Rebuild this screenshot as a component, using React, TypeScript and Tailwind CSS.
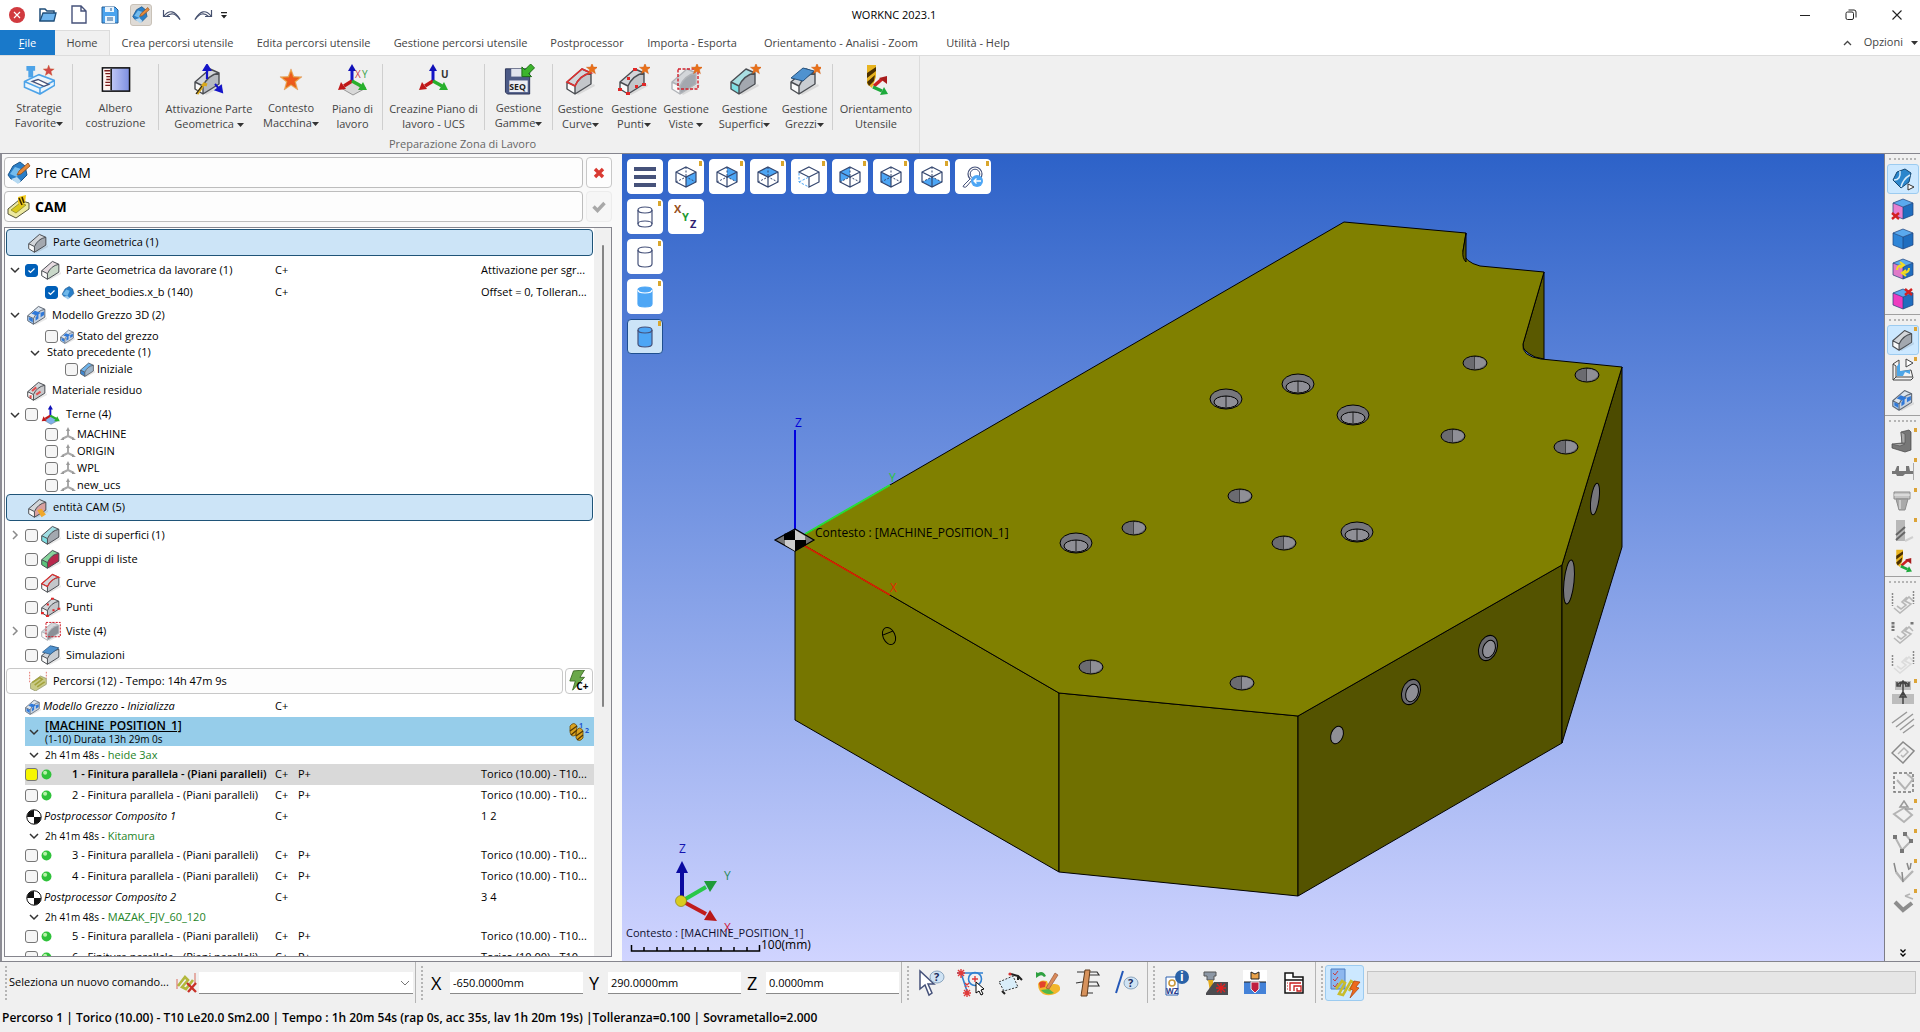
import { ReactNode } from "react";
import { clsx } from "clsx";

/* ---------- shared drawing pieces ---------- */

interface IconProps {
  className?: string;
}

const Star = ({ x = 25, y = 6, r = 6, fill = "#e8701a" }) => {
  const pts = Array.from({ length: 10 }, (_, i) => {
    const a = -Math.PI / 2 + (i * Math.PI) / 5;
    const d = i % 2 ? r * 0.42 : r;
    return `${(x + d * Math.cos(a)).toFixed(2)},${(y + d * Math.sin(a)).toFixed(2)}`;
  }).join(" ");
  return <polygon points={pts} fill={fill} stroke="#c5561099" strokeWidth=".5" />;
};

interface BlockProps extends IconProps {
  top?: string;
  front?: string;
  side?: string;
  stroke?: string;
  children?: ReactNode;
}

// rounded machining block, the base of most of the part icons
const Block = ({
  className = "size-8",
  top = "#d3d6da",
  front = "#fafafa",
  side = "#a3a8af",
  stroke = "#4a4d52",
  children,
}: BlockProps) => (
  <svg
    viewBox={className === "size-8" ? "0 0 32 32" : "1 3 28 28"}
    className={clsx("shrink-0", className)}
  >
    <path d="M3 19 L12 28 L29 20 L30 22 L13 31 Z" fill="#00000018" />
    <path d="M2 18 L17 5 L26 9 Q15 11 10 22 Z" fill={top} />
    <path d="M10 22 Q15 11 26 9 L26 20 L10 30 Z" fill={side} />
    <path d="M2 18 L10 22 L10 30 L2 25 Z" fill={front} />
    <path
      d="M2 18 L17 5 L26 9 L26 20 L10 30 L2 25 Z M2 18 L10 22 L10 30 M10 22 Q15 11 26 9"
      fill="none"
      stroke={stroke}
      strokeWidth="1.4"
      strokeLinejoin="round"
    />
    {children}
  </svg>
);

const StockBlock = ({ className }: IconProps) => (
  <Block className={className} top="#dbe4ee" side="#c9d3df" front="#a9cdf2" stroke="#5f6875">
    <path d="M7 15 L12 11 L20 14 L15 18Z M4 20 L9 22 L9 27 L4 24Z M13 20 L17 16 L17 22 L13 25Z M20 14 L25 12 L25 17 L20 20Z" fill="#2f78d8" />
  </Block>
);

const BluePart = ({ className = "size-5" }: IconProps) => (
  <svg viewBox="0 0 24 24" className={clsx("shrink-0", className)}>
    <path d="M2 14 L7 5 L14 1 L20 5 L22 13 L15 20 L5 18Z" fill="#2a7fc8" stroke="#1b5488" />
    <path d="M3 14 L9 6 L15 8 L11 17Z" fill="#6fb8ea" />
    <path d="M5 18 L11 17 L15 20 L12 23Z" fill="#9ecdf0" />
  </svg>
);

const PreCamIcon = ({ className = "size-6" }: IconProps) => (
  <svg viewBox="0 0 24 24" className={clsx("shrink-0", className)}>
    <path d="M1 14 L6 5 L13 1 L18 5 L20 14 L13 21 L4 18Z" fill="#2a7fc8" stroke="#1b5488" />
    <path d="M3 13 L8 6 L14 8 L10 16Z" fill="#74bced" />
    <path d="M4 18 L10 16 L14 20 L11 23Z" fill="#b5d9f2" />
    <path d="M10 14 L12 10 L21 2 L23 5 L14 13Z" fill="#e58a3c" stroke="#8d4a17" strokeWidth=".8" />
  </svg>
);

const CamIcon = ({ className = "size-6" }: IconProps) => (
  <svg viewBox="0 0 24 24" className={clsx("shrink-0", className)}>
    <path d="M1 14 L12 5 L22 8 L22 14 L9 23 L1 19Z" fill="#ece9a0" stroke="#55553a" />
    <path d="M4 15 L13 8 L19 10 L9 18Z" fill="#d8c81c" stroke="#86801c" strokeWidth=".7" />
    <path d="M11 2 L19 0 L18 8 L14 12 L11 8Z" fill="#f0c818" />
    <path d="M12 3 L15 10 M15 2 L17 8" stroke="#3c2b00" strokeWidth="1.6" />
  </svg>
);

interface TriadProps extends IconProps {
  label?: ReactNode;
  plane?: string;
}

const Triad = ({ className = "size-8", label, plane }: TriadProps) => (
  <svg viewBox="0 0 32 32" className={clsx("shrink-0", className)}>
    {plane && <path d="M16 17 L29 24 L16 31 L4 24Z" fill={plane} stroke="#777" strokeWidth=".7" />}
    <path d="M15 17 V5" stroke="#1414c8" strokeWidth="3" />
    <path d="M15 0 L19 7 H11Z" fill="#1010b8" />
    <path d="M15 17 L7 22" stroke="#c01818" strokeWidth="3.4" />
    <path d="M1 26 L4 18 L9 25Z" fill="#c01818" />
    <path d="M15 17 L24 22" stroke="#28b02c" strokeWidth="3.4" />
    <path d="M30 26 L21 26 L26 18Z" fill="#28b02c" />
    {label}
  </svg>
);

const GreyTriad = () => (
  <svg viewBox="0 0 16 16" className="size-4 shrink-0">
    <path d="M8 9 V2 M8 9 L2 12 M8 9 L14 12" stroke="#a9a9a9" strokeWidth="2" />
    <path d="M8 0 L10 4 H6Z M0 13 L4 10 L4 13Z M16 13 L12 10 L12 13Z" fill="#9a9a9a" />
  </svg>
);

const CurveBlock = ({ className }: IconProps) => (
  <Block className={className} side="#c3c6ca">
    <path d="M2 18 L17 5 L26 9 Q15 11 10 22Z" fill="none" stroke="#e03030" strokeWidth="1.6" />
  </Block>
);

const PointBlock = ({ className }: IconProps) => (
  <Block className={className} side="#c3c6ca">
    <path d="M15 4h4v3h-4z M1 24h4v3h-4z M8 28h4v3h-4z M24 18h4v3h-4z M9 12h3v3h-3z M17 20h3v3h-3z" fill="#e02828" />
  </Block>
);

const ViewBlock = ({ className }: IconProps) => (
  <Block className={className} stroke="#b0b3b8" side="#8b9097">
    <path d="M8 5 H28 V25 H8Z" fill="none" stroke="#d2202c" strokeWidth="1.4" strokeDasharray="3 1.5" />
  </Block>
);

const SimBlock = ({ className }: IconProps) => (
  <Block className={className} side="#c9cdd2">
    <path d="M3 13 L14 4 L26 7 L14 16Z" fill="#4f92cf" stroke="#24527f" />
  </Block>
);

const DrillTool = ({ className = "size-8" }: IconProps) => (
  <svg viewBox="0 0 32 32" className={clsx("shrink-0", className)}>
    <path d="M7 1 H16 V13 L12 24 L7 20Z" fill="#e8b420" />
    <path d="M7 9 L16 3 V7 L7 14Z M7 18 L15 11 L14 17 L9 22Z" fill="#4b3000" />
    <path d="M14 22 L22 15" stroke="#c22" strokeWidth="3.4" />
    <path d="M27 12 L27 20 L19 14Z" fill="#a81c1c" />
    <path d="M13 23 L22 27" stroke="#1eaa3c" strokeWidth="3.4" />
    <path d="M28 30 L20 31 L24 23Z" fill="#1eaa3c" />
  </svg>
);

const PathIcon = ({ className = "size-5" }: IconProps) => (
  <svg viewBox="0 0 24 24" className={clsx("shrink-0", className)}>
    <path d="M3 15 L15 6 L22 9 L22 16 L9 24 L3 21Z" fill="#c8ca86" stroke="#8a8c60" strokeWidth=".8" />
    <path d="M5 14 L14 8 L17 10 L8 17 M11 19 L20 13" fill="none" stroke="#a3a23c" strokeWidth="2" />
    <path d="M2 1 V14 M22 1 V9" stroke="#e05a50" strokeDasharray="2 1.5" />
  </svg>
);

const Chevron = ({ open = true }) => (
  <svg viewBox="0 0 10 10" className="size-[10px] shrink-0">
    <path
      d={open ? "M1 3 L5 7 L9 3" : "M3 1 L7 5 L3 9"}
      fill="none"
      stroke={open ? "#333" : "#8a8a8a"}
      strokeWidth="1.5"
    />
  </svg>
);

const Caret = () => (
  <svg viewBox="0 0 7 4" className="inline-block h-1 w-[7px] align-middle">
    <path d="M0 0 H7 L3.5 4Z" fill="#333" />
  </svg>
);

/* ---------- title bar ---------- */

const QuickAccess = () => (
  <div className="flex w-60 items-center pl-px">
    <button aria-label="Chiudi" className="grid w-[31px] place-items-center">
      <svg viewBox="0 0 16 16" className="size-4">
        <circle cx="8" cy="8" r="8" fill="#d13a3f" />
        <path d="M5 5 L11 11 M11 5 L5 11" stroke="#fff" strokeWidth="1.2" />
      </svg>
    </button>
    <button aria-label="Apri" className="grid w-[31px] place-items-center">
      <svg viewBox="0 0 18 16" className="h-4 w-[18px]">
        <path d="M1 14 V2 H6 L8 4 H15 V6" fill="none" stroke="#1f4e79" strokeWidth="1.5" />
        <path d="M1 14 L4 6 H17 L15 14Z" fill="#6db4ee" stroke="#1f4e79" strokeWidth="1.3" />
      </svg>
    </button>
    <button aria-label="Nuovo" className="grid w-[31px] place-items-center">
      <svg viewBox="0 0 16 20" className="h-5 w-4">
        <path d="M1 1 H10 L15 6 V18 H1Z M10 1 V6 H15" fill="#fff" stroke="#46527a" strokeWidth="1.4" />
      </svg>
    </button>
    <button aria-label="Salva" className="grid w-[31px] place-items-center">
      <svg viewBox="0 0 18 18" className="size-[18px]">
        <path d="M1 1 H14 L17 4 V17 H1Z" fill="#4aa3ee" stroke="#245d94" />
        <path d="M4 1 H13 V6 H4Z M4 10 H14 V17 H4Z" fill="#e9f4fd" />
        <path d="M10 2 V5 M6 12 H12 M6 14 H12" stroke="#245d94" />
      </svg>
    </button>
    <button aria-label="Pre CAM" className="grid w-[31px] place-items-center">
      <span className="grid size-[22px] place-items-center rounded-[3px] border border-[#c9c2b8] bg-[#dfdbd6]">
        <PreCamIcon className="size-[18px]" />
      </span>
    </button>
    <button aria-label="Annulla" className="grid w-[31px] place-items-center">
      <svg viewBox="0 0 20 14" className="h-[14px] w-5">
        <path d="M1.5 2 V8.5 H8 M2 8 Q10 -2 18 11.5" fill="none" stroke="#45506e" strokeWidth="1.2" />
        <path d="M4.5 8.5 Q11 2 18 11.5" fill="none" stroke="#45506e" strokeWidth="1.2" />
      </svg>
    </button>
    <button aria-label="Ripeti" className="grid w-[31px] place-items-center">
      <svg viewBox="0 0 20 14" className="h-[14px] w-5">
        <path d="M18.5 2 V8.5 H12 M18 8 Q10 -2 2 11.5" fill="none" stroke="#45506e" strokeWidth="1.2" />
        <path d="M15.5 8.5 Q9 2 2 11.5" fill="none" stroke="#45506e" strokeWidth="1.2" />
      </svg>
    </button>
    <button aria-label="Personalizza" className="grid w-3 place-items-center">
      <svg viewBox="0 0 6 7" className="h-[7px] w-[6px]">
        <path d="M0 0 H6 V1.2 H0Z M0 3 H6 L3 6.5Z" fill="#222" />
      </svg>
    </button>
  </div>
);

const TitleBar = () => (
  <header className="flex h-[30px] shrink-0 items-center bg-white">
    <QuickAccess />
    <h1 className="flex-1 text-center">WORKNC 2023.1</h1>
    <div className="flex w-[372px] justify-end">
      <button aria-label="Riduci" className="grid h-[30px] w-[46px] place-items-center">
        <svg viewBox="0 0 12 12" className="size-3">
          <path d="M1 6.5 H11" stroke="#222" />
        </svg>
      </button>
      <button aria-label="Ripristina" className="grid h-[30px] w-[46px] place-items-center">
        <svg viewBox="0 0 12 12" className="size-3">
          <rect x="1" y="3" width="7.5" height="7.5" rx="1.5" fill="none" stroke="#222" />
          <path d="M3.5 1 H9 Q11 1 11 3 V8.5" fill="none" stroke="#222" />
        </svg>
      </button>
      <button aria-label="Chiudi finestra" className="grid h-[30px] w-[46px] place-items-center">
        <svg viewBox="0 0 12 12" className="size-3">
          <path d="M1.5 1.5 L10.5 10.5 M10.5 1.5 L1.5 10.5" stroke="#222" strokeWidth="1.1" />
        </svg>
      </button>
    </div>
  </header>
);

/* ---------- ribbon ---------- */

const TABS = [
  { label: "Crea percorsi utensile", width: "w-[135px]" },
  { label: "Edita percorsi utensile", width: "w-[137px]" },
  { label: "Gestione percorsi utensile", width: "w-[157px]" },
  { label: "Postprocessor", width: "w-[96px]" },
  { label: "Importa - Esporta", width: "w-[114px]" },
  { label: "Orientamento - Analisi - Zoom", width: "w-[184px]" },
  { label: "Utilità - Help", width: "w-[90px]" },
];

const RibbonTabs = () => (
  <nav className="flex h-[25px] shrink-0 bg-white whitespace-nowrap text-[#444]">
    <button className="w-[55px] bg-[#1979ca] pt-px text-white">
      <span className="underline">F</span>ile
    </button>
    <button className="w-[55px] border-t border-r border-[#dcdcdc] bg-[#f0f0f0]">Home</button>
    {TABS.map((tab) => (
      <button key={tab.label} className={clsx("flex shrink-0 items-center justify-center pt-px", tab.width)}>
        {tab.label}
      </button>
    ))}
    <div className="ml-auto flex items-center gap-3 pr-[2px]">
      <svg viewBox="0 0 9 6" className="h-[6px] w-[9px]">
        <path d="M1 5 L4.5 1.5 L8 5" fill="none" stroke="#444" strokeWidth="1.3" />
      </svg>
      <button className="flex items-center gap-2">
        Opzioni <Caret />
      </button>
    </div>
  </nav>
);

interface RibbonItem {
  lines: [string, string];
  icon: ReactNode;
  width: string;
  menu?: boolean;
}

const RIBBON_GROUPS: RibbonItem[][] = [
  [
    {
      lines: ["Strategie", "Favorite"],
      width: "w-[66px]",
      menu: true,
      icon: (
        <svg viewBox="0 0 32 32" className="size-8">
          <path d="M3 2 H12 V7 H10 V14 H5 V7 H3Z" fill="#4da3e8" />
          <path d="M1 18 L16 11 L32 17 L32 22 L17 31 L1 24Z M1 18 L17 25 L32 17 M17 25 V31" fill="#eaf5fd" stroke="#4da3e8" strokeWidth="1.6" />
          <path d="M9 18 L15 16 L26 21 L21 23Z" fill="#fff" stroke="#46527a" strokeWidth="1.4" />
          <Star x={26} y={7} r={6} fill="#d24848" />
        </svg>
      ),
    },
  ],
  [
    {
      lines: ["Albero", "costruzione"],
      width: "w-[85px]",
      icon: (
        <svg viewBox="0 0 32 32" className="size-8">
          <defs>
            <linearGradient id="treeBg" x1="0" x2="1">
              <stop offset="0" stopColor="#dfe4ff" />
              <stop offset="1" stopColor="#7c8ee0" />
            </linearGradient>
          </defs>
          <rect x="2" y="4" width="28" height="24" fill="url(#treeBg)" stroke="#111" strokeWidth="1.6" />
          <rect x="3" y="5" width="8" height="22" fill="#fff3ee" />
          <path d="M4 7 H10 M5 10 H10 M6 13 H10 M6 16 H10 M5 19 H10 M5 22 H10" stroke="#7c1c1c" strokeWidth="1.4" />
          <path d="M11 5 V27" stroke="#111" strokeWidth="1.6" />
        </svg>
      ),
    },
  ],
  [
    {
      lines: ["Attivazione Parte", "Geometrica "],
      width: "w-[100px]",
      menu: true,
      icon: (
        <Block side="#b5b9bf">
          <path d="M14 15 V4 M14 1 L17 6 H11Z" stroke="#1414c8" strokeWidth="2.2" fill="#1414c8" />
          <path d="M22 20 L27 26 M29 28 L28 22 L23 26Z" stroke="#1414c8" strokeWidth="2" fill="#1414c8" />
          <path d="M4 30 L11 20 L14 21" fill="none" stroke="#d8a81c" strokeWidth="3" />
          <path d="M3 30 L9 22" stroke="#222" strokeWidth="1.2" />
        </Block>
      ),
    },
    {
      lines: ["Contesto", "Macchina"],
      width: "w-[64px]",
      menu: true,
      icon: (
        <svg viewBox="0 0 32 32" className="size-8">
          <Star x={16} y={17} r={12} fill="#f9b14a" />
          <Star x={16} y={17} r={9} fill="#ee5a1c" />
        </svg>
      ),
    },
    {
      lines: ["Piano di", "lavoro"],
      width: "w-[59px]",
      icon: (
        <Triad
          plane="#d8d8d8"
          label={
            <>
              <text x="18" y="14" fontSize="10" fill="#d04040">X</text>
              <text x="25" y="14" fontSize="10" fill="#38a048">Y</text>
            </>
          }
        />
      ),
    },
  ],
  [
    {
      lines: ["Creazine Piano di", "lavoro - UCS"],
      width: "w-[101px]",
      icon: <Triad label={<text x="23" y="14" fontSize="10" fontWeight="bold" fill="#333">U</text>} />,
    },
  ],
  [
    {
      lines: ["Gestione", "Gamme"],
      width: "w-[67px]",
      menu: true,
      icon: (
        <svg viewBox="0 0 32 32" className="size-8">
          <path d="M2 5 H27 V31 H4 L2 29Z" fill="#4c5a86" stroke="#2c3558" />
          <path d="M8 5 H20 V13 H8Z" fill="#dfe3ee" />
          <path d="M6 17 H25 V29 H6Z" fill="#eceef4" />
          <text x="6" y="27" fontSize="9" fontWeight="bold" fill="#222">SEQ</text>
          <path d="M19 13 V3 L22 6 L28 0 L32 4 L26 10 L29 13Z" fill="#3cb42c" stroke="#1c6c14" />
        </svg>
      ),
    },
  ],
  [
    {
      lines: ["Gestione", "Curve"],
      width: "w-[55px]",
      menu: true,
      icon: (
        <Block side="#c3c6ca">
          <path d="M2 18 L17 5 L26 9 Q15 11 10 22Z" fill="none" stroke="#e03030" strokeWidth="1.6" />
          <Star x={27} y={5} />
        </Block>
      ),
    },
    {
      lines: ["Gestione", "Punti"],
      width: "w-[52px]",
      menu: true,
      icon: (
        <Block side="#c3c6ca">
          <path d="M15 4h4v3h-4z M0 24h4v3h-4z M8 28h4v3h-4z M24 19h4v3h-4z M9 13h3v3h-3z M17 21h3v3h-3z" fill="#e02828" />
          <Star x={27} y={5} />
        </Block>
      ),
    },
    {
      lines: ["Gestione", "Viste "],
      width: "w-[52px]",
      menu: true,
      icon: (
        <Block stroke="#b0b3b8">
          <path d="M8 5 H28 V25 H8Z" fill="none" stroke="#d2202c" strokeWidth="1.4" strokeDasharray="3 1.5" />
          <Star x={27} y={5} />
        </Block>
      ),
    },
    {
      lines: ["Gestione", "Superfici"],
      width: "w-[65px]",
      menu: true,
      icon: (
        <Block front="#7fe0e4" top="#a9dfe2">
          <Star x={27} y={5} />
        </Block>
      ),
    },
    {
      lines: ["Gestione", "Grezzi"],
      width: "w-[55px]",
      menu: true,
      icon: (
        <Block side="#c9cdd2">
          <path d="M2 14 L14 4 L25 7 L14 17Z" fill="#4f92cf" stroke="#24527f" />
          <Star x={28} y={5} />
        </Block>
      ),
    },
  ],
  [{ lines: ["Orientamento", "Utensile"], width: "w-[86px]", icon: <DrillTool /> }],
];

const Ribbon = () => (
  <section className="flex h-[98px] shrink-0 border-t border-[#dcdcdc] bg-[#f0f0f0] text-[#444]">
    <div className="flex flex-col border-r border-[#dcdcdc] pl-[6px]">
      <div className="flex pt-2">
        {RIBBON_GROUPS.map((group, i) => (
          <div key={i} className={clsx("flex h-[66px]", i < RIBBON_GROUPS.length - 1 && "border-r border-[#cfcfcf]")}>
            {group.map((item) => (
              <button
                key={item.lines.join(" ")}
                className={clsx("flex shrink-0 flex-col items-center leading-[15px] whitespace-pre", item.width)}
              >
                {item.icon}
                <span className="mt-[5px]">{item.lines[0]}</span>
                <span>
                  {item.lines[1]}
                  {item.menu && <Caret />}
                </span>
              </button>
            ))}
          </div>
        ))}
      </div>
      <p className="mt-[6px] text-center leading-[15px] text-[#666]">Preparazione Zona di Lavoro</p>
    </div>
  </section>
);

/* ---------- tree panel ---------- */

interface TickProps {
  label: string;
  checked?: boolean;
  yellow?: boolean;
}

const Tick = ({ label, checked, yellow }: TickProps) => (
  <span className="relative size-[13px] shrink-0">
    <input
      type="checkbox"
      aria-label={label}
      defaultChecked={checked}
      className={clsx(
        "block size-[13px] appearance-none rounded-[3px] border border-[#767676] checked:border-[#005fb8] checked:bg-[#005fb8]",
        yellow ? "bg-[#f6f600]" : "bg-[#f5f5f5]",
      )}
    />
    {checked && (
      <svg viewBox="0 0 13 13" className="pointer-events-none absolute inset-0">
        <path d="M3.5 6.5 L5.5 8.5 L9.5 4.5" fill="none" stroke="#fff" strokeWidth="1.2" />
      </svg>
    )}
  </span>
);

interface TreeRowProps {
  label: string;
  height: string;
  indent?: string;
  chevron?: "open" | "closed" | "none";
  tick?: boolean;
  checked?: boolean;
  yellow?: boolean;
  icon?: ReactNode;
  gap?: string;
  flags?: string;
  post?: string;
  info?: string;
  labelClass?: string;
  rowClass?: string;
}

const TreeRow = ({
  label,
  height,
  indent = "pl-0",
  chevron,
  tick,
  checked,
  yellow,
  icon,
  gap = "pl-[5px]",
  flags,
  post,
  info,
  labelClass,
  rowClass,
}: TreeRowProps) => (
  <li className={clsx("grid grid-cols-[270px_23px_183px_1fr] items-center whitespace-nowrap", height, rowClass)}>
    <div className={clsx("flex items-center", indent)}>
      {chevron && (
        <span className="grid w-5 shrink-0 place-items-center">
          {chevron !== "none" && <Chevron open={chevron === "open"} />}
        </span>
      )}
      {tick && <Tick label={label} checked={checked} yellow={yellow} />}
      {icon}
      <span className={clsx(gap, labelClass)}>{label}</span>
    </div>
    <span>{flags}</span>
    <span>{post}</span>
    <span>{info}</span>
  </li>
);

const wide = (icon: ReactNode) => <span className="ml-[3px] grid size-5 shrink-0 place-items-center">{icon}</span>;
const bare = (icon: ReactNode) => <span className="ml-[2px] grid size-5 shrink-0 place-items-center">{icon}</span>;
const small = (icon: ReactNode) => <span className="ml-[2px] grid size-[15px] shrink-0 place-items-center">{icon}</span>;

const UCS_NAMES = ["MACHINE", "ORIGIN", "WPL", "new_ucs"];

const PartTree = () => (
  <ul className="pt-px">
    <TreeRow
      label="Parte Geometrica da lavorare (1)"
      height="h-[26px]"
      chevron="open"
      tick
      checked
      icon={wide(<Block className="size-5" side="#c9d8c9" top="#e6dbe0" />)}
      flags="C+"
      info="Attivazione per sgr..."
    />
    <TreeRow
      label="sheet_bodies.x_b (140)"
      height="h-[19px]"
      indent="pl-10"
      tick
      checked
      icon={small(<BluePart className="size-[14px]" />)}
      gap="pl-[2px]"
      flags="C+"
      info="Offset = 0, Tolleran..."
    />
    <TreeRow
      label="Modello Grezzo 3D (2)"
      height="h-[26px]"
      chevron="open"
      icon={bare(<StockBlock className="size-5" />)}
    />
    <TreeRow
      label="Stato del grezzo"
      height="h-4"
      indent="pl-10"
      tick
      icon={small(<StockBlock className="size-[15px]" />)}
      gap="pl-[2px]"
    />
    <TreeRow label="Stato precedente (1)" height="h-[17px]" indent="pl-5" chevron="open" gap="pl-[2px]" />
    <TreeRow
      label="Iniziale"
      height="h-[17px]"
      indent="pl-[60px]"
      tick
      icon={small(<Block className="size-[15px]" top="#6fb3ea" front="#3d86cf" side="#9fb3c6" />)}
      gap="pl-[2px]"
    />
    <TreeRow
      label="Materiale residuo"
      height="h-[25px]"
      chevron="none"
      icon={bare(
        <Block className="size-5" side="#c9c9cc">
          <path d="M8 17 L14 12 M6 23 L6 27 M14 22 L20 18" stroke="#e05050" strokeWidth="3" />
        </Block>,
      )}
    />
    <TreeRow
      label="Terne (4)"
      height="h-[23px]"
      chevron="open"
      tick
      icon={wide(<Triad className="size-5" plane="#7fb0ea" />)}
    />
    {UCS_NAMES.map((name) => (
      <TreeRow
        key={name}
        label={name}
        height="h-[17px]"
        indent="pl-10"
        tick
        icon={small(<GreyTriad />)}
        gap="pl-[2px]"
      />
    ))}
  </ul>
);

const EntityTree = () => (
  <ul className="pt-[2px] pb-px">
    <TreeRow
      label="Liste di superfici (1)"
      height="h-6"
      chevron="closed"
      tick
      icon={wide(<Block className="size-5" front="#7fe0e4" top="#9fdde2" />)}
    />
    <TreeRow
      label="Gruppi di liste"
      height="h-6"
      chevron="none"
      tick
      icon={wide(<Block className="size-5" front="#5cc47c" top="#86d49c" side="#b8284c" />)}
    />
    <TreeRow label="Curve" height="h-6" chevron="none" tick icon={wide(<CurveBlock className="size-5" />)} />
    <TreeRow label="Punti" height="h-6" chevron="none" tick icon={wide(<PointBlock className="size-5" />)} />
    <TreeRow label="Viste (4)" height="h-6" chevron="closed" tick icon={wide(<ViewBlock className="size-5" />)} />
    <TreeRow label="Simulazioni" height="h-6" chevron="none" tick icon={wide(<SimBlock className="size-5" />)} />
  </ul>
);

const GreenBall = () => (
  <svg viewBox="0 0 12 12" className="ml-[3px] size-[11px] shrink-0">
    <circle cx="6" cy="6" r="5.4" fill="#2fc23a" />
    <circle cx="4.5" cy="4" r="2.2" fill="#b6f2a8" />
  </svg>
);

const PostIcon = () => (
  <svg viewBox="0 0 16 16" className="size-4 shrink-0">
    <circle cx="8" cy="8" r="7.2" fill="#fff" stroke="#111" />
    <path d="M8 8 V1 A7 7 0 0 0 1 8Z M8 8 V15 A7 7 0 0 0 15 8Z" fill="#111" />
  </svg>
);

const PathRow = ({ n, selected = false }: { n: number; selected?: boolean }) => (
  <TreeRow
    label={`${n} - Finitura parallela - (Piani paralleli)`}
    height="h-[21px]"
    indent="pl-5"
    tick
    yellow={selected}
    icon={<GreenBall />}
    gap="pl-5"
    flags="C+"
    post="P+"
    info="Torico (10.00) - T10..."
    labelClass={clsx(selected && "font-semibold")}
    rowClass={clsx(selected && "bg-[linear-gradient(to_right,transparent_20px,#d9d9d9_20px)]")}
  />
);

const PostRow = ({ n, info }: { n: number; info: string }) => (
  <TreeRow
    label={`Postprocessor Composito ${n}`}
    height="h-[21px]"
    indent="pl-[21px]"
    icon={<PostIcon />}
    gap="pl-[2px]"
    flags="C+"
    info={info}
    labelClass="italic"
  />
);

const MachineRow = ({ name }: { name: string }) => (
  <li className="flex h-[18px] items-center pl-6">
    <Chevron />
    <span className="pl-[6px] text-[10px]">2h 41m 48s -</span>
    <span className="pl-[3px] text-[#1e8427]">{name}</span>
  </li>
);

const PathTree = () => (
  <ul className="pt-[2px]">
    <TreeRow
      label="Modello Grezzo - Inizializza"
      height="h-[21px]"
      indent="pl-5"
      icon={<StockBlock className="size-4" />}
      gap="pl-[2px]"
      flags="C+"
      labelClass="italic"
    />
    <li className="ml-5 flex h-[29px] items-center bg-[#96cdea] pl-1">
      <Chevron />
      <div className="flex-1 pl-[6px]">
        <p className="text-xs leading-[15px] font-semibold underline">[MACHINE_POSITION_1]</p>
        <p className="text-[10px] leading-3">(1-10) Durata 13h 29m 0s</p>
      </div>
      <button aria-label="Riordina" className="mr-1">
        <svg viewBox="0 0 22 20" className="h-5 w-[22px]">
          <path d="M2 4 Q6 -1 9 4 L8 13 Q3 16 2 10Z M8 9 Q12 3 15 9 L15 16 Q11 21 8 16Z" fill="#d9a21e" stroke="#6d4b08" strokeWidth=".8" />
          <path d="M2 9 L9 4 M3 13 L9 8 M8 14 L15 9 M9 18 L15 13" stroke="#4d3406" strokeWidth="1.1" />
          <text x="11" y="6" fontSize="7" fontWeight="bold" fill="#1f55d0">1</text>
          <text x="17" y="11" fontSize="7" fontWeight="bold" fill="#1f55d0">2</text>
        </svg>
      </button>
    </li>
    <MachineRow name="heide 3ax" />
    <PathRow n={1} selected />
    <PathRow n={2} />
    <PostRow n={1} info="1 2" />
    <MachineRow name="Kitamura" />
    <PathRow n={3} />
    <PathRow n={4} />
    <PostRow n={2} info="3 4" />
    <MachineRow name="MAZAK_FJV_60_120" />
    <PathRow n={5} />
    <PathRow n={6} />
  </ul>
);

const SectionHeader = ({ icon, children }: { icon: ReactNode; children: ReactNode }) => (
  <h2 className="mx-px flex h-[27px] items-center gap-[5px] rounded-[4px] border border-[#1f5478] bg-[#cce4f7] pl-[21px]">
    <span className="grid size-5 place-items-center">{icon}</span>
    {children}
  </h2>
);

const SidePanel = () => (
  <aside className="flex min-h-0 w-[622px] shrink-0 flex-col border-l-2 border-[#8c8c94] bg-[#f9f9f9] pt-[3px] pr-[10px] pb-1 pl-[2px]">
    <div className="flex gap-[3px]">
      <button className="flex h-[31px] flex-1 items-center gap-1 rounded-[4px] border border-[#bdbdbd] bg-[#fdfdfd] pl-[2px] text-sm">
        <PreCamIcon /> Pre CAM
      </button>
      <button aria-label="Annulla" className="grid h-[31px] w-[26px] place-items-center rounded-[4px] border border-[#c8c8c8] bg-[#fdfdfd]">
        <svg viewBox="0 0 12 12" className="size-3">
          <path d="M2 2 L10 10 M10 2 L2 10" stroke="#d93a32" strokeWidth="3.4" />
        </svg>
      </button>
    </div>
    <div className="mt-[3px] flex gap-[3px]">
      <button className="flex h-[31px] flex-1 items-center gap-1 rounded-[4px] border border-[#bdbdbd] bg-[#fdfdfd] pl-[2px] text-sm font-bold">
        <CamIcon /> CAM
      </button>
      <button aria-label="Conferma" className="grid h-[31px] w-[26px] place-items-center rounded-[4px] border border-[#ececec] bg-[#f6f6f6]">
        <svg viewBox="0 0 14 12" className="h-3 w-[14px]">
          <path d="M1.5 5.5 L5.5 9.5 L12.5 2" fill="none" stroke="#a8a8a8" strokeWidth="3.4" />
        </svg>
      </button>
    </div>
    <div className="mt-[5px] flex min-h-0 flex-1 border border-[#85858d] bg-white">
      <div className="min-w-0 flex-1 overflow-hidden pt-px">
        <SectionHeader icon={<Block className="size-5" />}>Parte Geometrica (1)</SectionHeader>
        <PartTree />
        <SectionHeader
          icon={
            <Block className="size-5" side="#d8a0a0">
              <path d="M14 20 L20 30 L26 26 L20 18Z" fill="#f0a82c" />
            </Block>
          }
        >
          entità CAM (5)
        </SectionHeader>
        <EntityTree />
        <div className="mx-px flex gap-[2px]">
          <h2 className="flex h-[26px] flex-1 items-center gap-[5px] rounded-[4px] border border-[#c8c8c8] bg-[#fdfdfd] pl-[21px]">
            <PathIcon />
            Percorsi (12) - Tempo: 14h 47m 9s
          </h2>
          <button aria-label="Calcola tutto" className="grid h-[26px] w-7 place-items-center rounded-[4px] border border-[#c8c8c8] bg-[#fdfdfd]">
            <svg viewBox="0 0 24 24" className="size-[22px]">
              <path d="M6 1 L18 0 L13 8 L18 8 L5 22 L8 12 L2 12Z" fill="#6aa84a" stroke="#3d6b26" />
              <text x="9" y="22" fontSize="11" fontWeight="bold" fill="#000">C+</text>
            </svg>
          </button>
        </div>
        <PathTree />
      </div>
      <div className="flex w-[17px] justify-center bg-[#f0f0f0] pt-[17px]">
        <div className="h-[462px] w-[2px] rounded bg-[#858585]" />
      </div>
    </div>
  </aside>
);

/* ---------- viewport ---------- */

const HOLES = [
  [1475, 363], [1587, 375], [1453, 436], [1566, 447], [1240, 496],
  [1134, 528], [1284, 543], [1091, 667], [1242, 683],
];
const BORES = [[1226, 399], [1298, 384], [1353, 415], [1076, 543], [1357, 532]];

const Scene = () => (
  <svg viewBox="622 154 1262 807" preserveAspectRatio="xMidYMid meet" className="absolute inset-0 h-full w-full">
    <g stroke="#000" strokeWidth="1" strokeLinejoin="round">
      <path d="M795 540 L1059 693 V872 L795 720Z" fill="#767600" />
      <path d="M1059 693 L1298 716 V896 L1059 872Z" fill="#707000" />
      <path d="M1298 716 L1562 565 V743 L1298 896Z" fill="#545300" />
      <path d="M1562 565 L1622 367 V547 L1562 743Z" fill="#4c4b00" />
      <path d="M1544 272 V359 L1535 357 Q1521 350 1523 344Z" fill="#5a5900" />
      <path
        d="M795 540 L1344 222 L1466 233 L1463 251 Q1464 262 1480 266 L1544 272 L1523 344 Q1521 356 1541 359 L1622 367 L1562 565 L1298 716 L1059 693Z"
        fill="#808000"
      />
      <path d="M1466 233 V262 Q1462 258 1463 251Z" fill="#5a5900" />
    </g>
    {HOLES.map(([x, y]) => (
      <g key={`${x}-${y}`}>
        <ellipse cx={x} cy={y} rx="12" ry="7" fill="#6b6b70" stroke="#000" />
        <path d={`M${x} ${y - 7} V${y + 6}`} stroke="#000" strokeWidth=".8" />
        <path d={`M${x} ${y - 6} Q${x + 11} ${y - 5} ${x + 11} ${y} Q${x + 9} ${y + 5} ${x} ${y + 6}Z`} fill="#8f8f96" />
      </g>
    ))}
    {BORES.map(([x, y]) => (
      <g key={`${x}-${y}`} stroke="#000">
        <ellipse cx={x} cy={y} rx="16" ry="10" fill="#77777c" />
        <ellipse cx={x} cy={y + 3} rx="12" ry="6" fill="#8f8f96" />
        <path d={`M${x} ${y - 3} V${y + 8}`} strokeWidth=".8" />
      </g>
    ))}
    <g stroke="#000">
      <ellipse cx="889" cy="636" rx="6" ry="9" transform="rotate(-25 889 636)" fill="#737300" />
      <path d="M883 635 L893 631" />
      <ellipse cx="1337" cy="735" rx="6" ry="9" transform="rotate(20 1337 735)" fill="#8f8f96" />
      <ellipse cx="1411" cy="692" rx="9" ry="13" transform="rotate(20 1411 692)" fill="#6b6b70" />
      <ellipse cx="1412" cy="693" rx="6" ry="9" transform="rotate(20 1412 693)" fill="#8f8f96" />
      <ellipse cx="1488" cy="648" rx="9" ry="13" transform="rotate(20 1488 648)" fill="#6b6b70" />
      <ellipse cx="1489" cy="649" rx="6" ry="9" transform="rotate(20 1489 649)" fill="#8f8f96" />
      <ellipse cx="1595" cy="499" rx="4" ry="16" transform="rotate(8 1595 499)" fill="#77777c" />
      <ellipse cx="1569" cy="582" rx="5" ry="22" transform="rotate(6 1569 582)" fill="#77777c" />
    </g>
    {/* machine origin */}
    <path d="M795 540 V430" stroke="#0000e0" strokeWidth="2" />
    <path d="M805 534 L890 485" stroke="#28e038" strokeWidth="2" />
    <path d="M803 545 L890 595" stroke="#d82000" strokeWidth="1.5" />
    <path d="M775 540 L795 529 L814 540 L795 551Z" fill="#777" stroke="#000" strokeWidth="1.2" />
    <path d="M795 540 V530 L784 534 V540Z M795 540 V551 L806 545 V540Z" fill="#000" />
    <path d="M795 540 V530 L805 536 V540Z M795 540 V551 L785 545 V540Z" fill="#ccc" />
    <g fontSize="12">
      <text x="795" y="427" fill="#0000d8">Z</text>
      <text x="889" y="482" fill="#28c838">Y</text>
      <text x="890" y="592" fill="#e02800">X</text>
      <text x="815" y="537">Contesto : [MACHINE_POSITION_1]</text>
    </g>
    {/* view triad */}
    <path d="M682 899 V870" stroke="#0a0aa0" strokeWidth="4" />
    <path d="M682 861 L688 873 H676Z" fill="#0a0aa0" />
    <path d="M682 901 L706 887" stroke="#28c848" strokeWidth="4" />
    <path d="M717 881 L710 892 L704 881Z" fill="#1f9a38" />
    <path d="M682 901 L706 914" stroke="#c01c1c" strokeWidth="4" />
    <path d="M717 921 L704 920 L710 910Z" fill="#b81818" />
    <circle cx="681" cy="901" r="5.5" fill="#d8cc20" stroke="#7d7410" strokeWidth=".6" />
    <g fontSize="12">
      <text x="679" y="853" fill="#1414b0">Z</text>
      <text x="724" y="880" fill="#2a8a5a">Y</text>
      <text x="724" y="932" fill="#d02040">X</text>
      <text x="626" y="937" fontSize="11" fill="#101030">Contesto : [MACHINE_POSITION_1]</text>
      <text x="761" y="949">100(mm)</text>
    </g>
    <path
      d="M631.5 945 V951 H759.5 V945 M644 947 V951 M657 947 V951 M670 947 V951 M683 947 V951 M695 947 V951 M708 947 V951 M721 947 V951 M734 947 V951 M747 947 V951"
      fill="none"
      stroke="#000"
      strokeWidth="1.5"
    />
  </svg>
);

const CUBE_FACES: Record<string, string> = {
  Destra: "M12 12 L22 7 V17 L12 22Z",
  Retro: "M12 2 L22 7 V17 L12 12Z",
  Alto: "M12 2 L22 7 L12 12 L2 7Z",
  Isometrica: "",
  Sinistra: "M2 7 L12 2 V12 L2 17Z",
  Fronte: "M2 7 L12 12 V22 L2 17Z",
  Basso: "M2 17 L12 12 L22 17 L12 22Z",
};

const CubeIcon = ({ face }: { face: string }) => (
  <svg viewBox="0 0 24 24" className="size-6">
    {face && <path d={face} fill="#4da6f5" />}
    {face ? (
      <>
        <path d="M12 2 L22 7 V17 L12 22 L2 17 V7Z M2 7 L12 12 L22 7 M12 12 V22" fill="none" stroke="#34466e" strokeWidth="1.2" />
        <path d="M12 2 V12 M2 17 L12 12 L22 17" fill="none" stroke="#34466e" strokeDasharray="2 1.5" />
      </>
    ) : (
      <>
        <path d="M12 2 L22 7 V17 L12 22 V12 L2 7Z M12 12 L22 7" fill="none" stroke="#34466e" strokeWidth="1.2" />
        <path d="M2 8 V17 L12 22 M2 17 L12 12" fill="none" stroke="#4da6f5" strokeDasharray="2.5 1.5" />
      </>
    )}
  </svg>
);

interface CylinderProps {
  fill?: string;
  stroke?: string;
  rim?: string;
  hidden?: boolean;
}

const Cylinder = ({ fill = "none", stroke = "#46527a", rim = "#46527a", hidden }: CylinderProps) => (
  <svg viewBox="0 0 24 24" className="size-6">
    <path d="M5 5 V19 Q5 22 12 22 Q19 22 19 19 V5 Q19 2 12 2 Q5 2 5 5Z" fill={fill} stroke={stroke} strokeWidth="1.2" />
    <path d="M5 5 Q5 8 12 8 Q19 8 19 5" fill="none" stroke={rim} strokeWidth="1.2" />
    {hidden && <path d="M5 19 Q5 16 12 16 Q19 16 19 19" fill="none" stroke={stroke} strokeWidth="1.2" />}
  </svg>
);

interface ViewButtonProps {
  label: string;
  plain?: boolean;
  active?: boolean;
  children: ReactNode;
}

const ViewButton = ({ label, plain, active, children }: ViewButtonProps) => (
  <button
    aria-label={label}
    className={clsx(
      "relative grid h-[35px] w-9 place-items-center rounded-[4px] border",
      active ? "border-[#1f4f8f] bg-[#cce4f7]" : "border-white bg-white",
    )}
  >
    {children}
    {!plain && <span className="absolute top-px right-px h-[5px] w-[3px] bg-[#d9a62c]" />}
  </button>
);

const ViewToolbar = () => (
  <div className="absolute top-[5px] left-[5px] flex flex-col gap-[5px]">
    <div className="flex gap-[5px]">
      <ViewButton label="Menu" plain>
        <svg viewBox="0 0 22 20" className="h-5 w-[22px]">
          <path d="M0 0 H22 V4 H0Z M0 8 H22 V12 H0Z M0 16 H22 V20 H0Z" fill="#46527a" />
        </svg>
      </ViewButton>
      {Object.entries(CUBE_FACES).map(([name, face]) => (
        <ViewButton key={name} label={name}>
          <CubeIcon face={face} />
        </ViewButton>
      ))}
      <ViewButton label="Vista precedente">
        <svg viewBox="0 0 24 24" className="size-6">
          <circle cx="14" cy="9" r="7" fill="#fff" stroke="#46527a" strokeWidth="1.2" />
          <circle cx="14" cy="9" r="4.8" fill="none" stroke="#46527a" />
          <path d="M9 14 L3 20 Q1 22 3 22 Q4 23 6 21 L11 15" fill="#fff" stroke="#46527a" />
          <circle cx="16" cy="16" r="6" fill="#4da6f5" />
          <path d="M20 16 H13 M15.5 13.5 L13 16 L15.5 18.5" fill="none" stroke="#fff" strokeWidth="1.3" />
        </svg>
      </ViewButton>
    </div>
    <div className="flex gap-[5px]">
      <ViewButton label="Fil di ferro">
        <Cylinder hidden />
      </ViewButton>
      <ViewButton label="Assi" plain>
        <svg viewBox="0 0 24 24" className="size-6" fontSize="11" fontWeight="bold">
          <text x="0" y="8" fill="#96501c">X</text>
          <text x="8" y="16" fill="#1e9a32">Y</text>
          <text x="16" y="23" fill="#2e2070">Z</text>
        </svg>
      </ViewButton>
    </div>
    <ViewButton label="Linee nascoste">
      <Cylinder />
    </ViewButton>
    <ViewButton label="Ombreggiato">
      <Cylinder fill="#4da6f5" stroke="#4da6f5" rim="#fff" />
    </ViewButton>
    <ViewButton label="Ombreggiato con bordi" active>
      <Cylinder fill="#4da6f5" />
    </ViewButton>
  </div>
);

const Viewport = () => (
  <main className="relative min-w-0 flex-1 overflow-hidden bg-linear-to-b from-[#2d62c8] to-[#d0d4ff]">
    <Scene />
    <ViewToolbar />
  </main>
);

/* ---------- right toolbar ---------- */

interface CubeToolProps {
  left?: string;
  top?: string;
  right?: string;
  children?: ReactNode;
}

const CubeTool = ({ left = "#2f86d8", top = "#5aa9ee", right = "#1f6dbf", children }: CubeToolProps) => (
  <svg viewBox="0 0 24 24" className="size-6">
    <path d="M12 2 L22 6 L12 10 L2 6Z" fill={top} />
    <path d="M2 6 L12 10 V22 L2 18Z" fill={left} />
    <path d="M22 6 L12 10 V22 L22 18Z" fill={right} />
    <path d="M12 2 L22 6 V18 L12 22 L2 18 V6Z M2 6 L12 10 L22 6 M12 10 V22" fill="none" stroke="#1d3f78" strokeWidth=".7" />
    {children}
  </svg>
);

const GreyTool = ({ children }: { children: ReactNode }) => (
  <svg viewBox="0 0 24 24" className="size-6" fill="none" stroke="#b4b4b4" strokeWidth="1.5">
    {children}
  </svg>
);

const Zigzag = ({ faint = false }) => (
  <path
    d="M3 18 L9 23 L20 14 L14 11 L18 7 L22 11 M6 16 L10 19 L15 15 L11 12 L16 7"
    stroke={faint ? "#dcdcdc" : "#b8b8b8"}
    strokeWidth="1.6"
  />
);

interface Tool {
  label: string;
  icon: ReactNode;
  active?: boolean;
  mark?: boolean;
}

const SIDE_TOOLS: Tool[][] = [
  [
    {
      label: "Selezione superfici",
      active: true,
      icon: (
        <svg viewBox="0 0 24 24" className="size-6">
          <path d="M2 13 L6 5 L14 2 L20 6 L18 15 L10 21Z" fill="#2b86cc" stroke="#16466f" />
          <path d="M3 13 Q10 13 9 4 M10 20 Q12 12 19 8" fill="none" stroke="#d6ecfb" strokeWidth="1.5" />
          <path d="M17 17 L23 20 L17 23Z" fill="#fff" stroke="#333" />
        </svg>
      ),
    },
    {
      label: "Nascondi",
      icon: (
        <CubeTool left="#e880d0">
          <path d="M1 16 L8 22 M8 16 L1 22" stroke="#d32020" strokeWidth="2.4" />
        </CubeTool>
      ),
    },
    { label: "Mostra tutto", icon: <CubeTool /> },
    {
      label: "Inverti",
      icon: (
        <CubeTool left="#e07ac8">
          <path d="M6 13 Q6 8 12 8 M9 5 L13 8 L9 11 M18 11 Q18 16 12 16 M15 13 L11 16 L15 19" fill="none" stroke="#f2dc20" strokeWidth="2" />
        </CubeTool>
      ),
    },
    {
      label: "Elimina",
      icon: (
        <CubeTool left="#ee3cc0">
          <path d="M14 2 L21 8 M21 2 L14 8" stroke="#d32020" strokeWidth="2.4" />
        </CubeTool>
      ),
    },
  ],
  [
    { label: "Parte", active: true, mark: true, icon: <Block className="size-[22px]" /> },
    {
      label: "Sezione",
      mark: true,
      icon: (
        <svg viewBox="0 0 24 24" className="size-6">
          <path d="M2 6 L8 2 V14 L20 12 L22 20 L20 22 H2Z" fill="#f4f4f4" stroke="#444" />
          <path d="M6 18 V8 L9 5 V13 L19 12 V16 L14 14 L12 18Z" fill="#4da6e8" />
          <path d="M2 6 L5 8 V19 L2 22 M5 19 H21" fill="none" stroke="#444" />
          <path d="M15 1 L22 5 L15 9Z" fill="#fff" stroke="#444" />
        </svg>
      ),
    },
    { label: "Grezzo", icon: <StockBlock className="size-[22px]" /> },
  ],
  [
    {
      label: "Macchina",
      mark: true,
      icon: (
        <svg viewBox="0 0 24 24" className="size-6">
          <path d="M10 3 L18 1 L20 3 V21 L14 23 L1 19 V15 L11 14Z" fill="#777" stroke="#444" strokeWidth=".7" />
          <path d="M10 3 L14 5 V14 L11 14Z M1 15 L9 17 L14 15" fill="#aaa" stroke="#555" strokeWidth=".7" />
        </svg>
      ),
    },
    {
      label: "Morsa",
      mark: true,
      icon: (
        <svg viewBox="0 0 24 24" className="size-6">
          <path d="M1 12 H4 L6 7 H8 V12 H15 V7 H18 L19 12 H22 V15 H14 L12 17 H6 L5 15 H1Z" fill="#777" />
          <path d="M22.5 4 V21" stroke="#aaa" />
        </svg>
      ),
    },
    {
      label: "Portautensile",
      mark: true,
      icon: (
        <svg viewBox="0 0 24 24" className="size-6">
          <path d="M3 3 H19 V10 H3Z" fill="#c4c4c4" stroke="#8c8c8c" />
          <path d="M5 10 H17 L14 21 H8Z" fill="#aaa" stroke="#8c8c8c" />
          <path d="M3 6 H19 M9 11 V20" stroke="#efefef" />
        </svg>
      ),
    },
    {
      label: "Fresa",
      mark: true,
      icon: (
        <svg viewBox="0 0 24 24" className="size-6">
          <path d="M5 1 H14 V22 H5Z" fill="#b8b8b8" />
          <path d="M5 16 L14 8 M5 21 L14 13" stroke="#666" strokeWidth="2" />
          <path d="M14 22 L22 18" stroke="#d0d0d0" strokeWidth="2" />
        </svg>
      ),
    },
    { label: "Orientamento utensile", icon: <DrillTool className="size-6" /> },
  ],
  [
    { label: "Percorso completo", icon: <GreyTool><Zigzag /><path d="M1.5 3 V16 M22.5 1 V14" stroke="#8a8a8a" strokeDasharray="2 1" /></GreyTool> },
    { label: "Senza rapidi", icon: <GreyTool><Zigzag /><path d="M2 2 V11 M21 2 V5" stroke="#777" strokeWidth="3" strokeDasharray="2.5 1" /></GreyTool> },
    { label: "Solo rapidi", icon: <GreyTool><Zigzag faint /><path d="M1.5 5 V17 M22.5 1 V14" stroke="#8a8a8a" strokeDasharray="2 1" /></GreyTool> },
    {
      label: "Assi utensile",
      mark: true,
      icon: (
        <GreyTool>
          <path d="M1 14 H23 V24 H1Z M4 1 H20 V10 H4Z" fill="#bdbdbd" stroke="none" />
          <path d="M12 24 V2 M9 5 L12 1 L15 5 M12 12 L9 17 H15Z M6 6 Q8 2 12 2 Q16 2 18 6 M6 2 V6 H10 M18 2 V6 H14" stroke="#444" />
        </GreyTool>
      ),
    },
    { label: "Linee parallele", icon: <GreyTool><path d="M1 13 L16 2 M5 17 L22 4 M9 20 L23 9 M12 23 L23 15" stroke="#999" /></GreyTool> },
    { label: "Contorno", icon: <GreyTool><path d="M1 13 L12 2 L23 11 L12 23Z" stroke="#8a8a8a" /><path d="M7 14 L13 8 L17 12 L12 17 L10 15" /></GreyTool> },
    { label: "Area", icon: <GreyTool><path d="M3 3 H22 V22 H3Z" stroke="#777" strokeDasharray="3 2" /><path d="M6 10 L14 19 L22 9 L16 4" strokeWidth="2" /></GreyTool> },
    { label: "Piano", mark: true, icon: <GreyTool><path d="M3 14 L13 8 L21 15 L13 22Z" strokeWidth="2" /><path d="M9 7 L13 1 L17 7Z M14 9 H22" stroke="#999" /></GreyTool> },
    { label: "Punti percorso", mark: true, icon: <GreyTool><path d="M4 7 L11 20 L20 11 L14 4" strokeWidth="2" /><path d="M2 5h4v4h-4z M9 19h4v4h-4z M18 9h4v4h-4z M12 2h4v4h-4z" fill="#777" stroke="none" /></GreyTool> },
    { label: "Vettori", mark: true, icon: <GreyTool><path d="M5 12 L12 21 L22 11" strokeWidth="2.4" /><path d="M3 3 L5 12 M11 12 L12 22 M16 3 L18 10 M20 3 L19 9" stroke="#888" /></GreyTool> },
    { label: "Collisioni", mark: true, icon: <GreyTool><path d="M4 12 L12 20 L21 13" stroke="#8d8d8d" strokeWidth="4" /><path d="M14 6 L22 9 M14 6 L19 4" /></GreyTool> },
  ],
];

const GripH = () => <div className="mx-auto my-1 h-0 w-[27px] border-t-2 border-dotted border-[#b5b5b5]" />;
const GripV = () => <div className="mr-[2px] ml-[5px] h-[34px] w-0 shrink-0 border-l-2 border-dotted border-[#b5b5b5]" />;

const SideToolbar = () => (
  <aside className="flex w-9 shrink-0 flex-col overflow-hidden border-l border-[#7d7d86] bg-[#f0f0f0]">
    {SIDE_TOOLS.map((group, i) => (
      <div key={i} className={clsx("flex flex-col items-center", i > 0 && "border-t border-[#a0a0a0]")}>
        <GripH />
        {group.map((tool) => (
          <button
            key={tool.label}
            aria-label={tool.label}
            className={clsx(
              "relative grid h-[30px] w-8 place-items-center rounded-[3px] border",
              tool.active ? "border-[#9ccbf0] bg-[#cce8ff]" : "border-transparent",
            )}
          >
            {tool.icon}
            {tool.mark && <span className="absolute top-px right-px h-1 w-[3px] bg-[#dca437]" />}
          </button>
        ))}
      </div>
    ))}
    <button aria-label="Altri" className="mt-auto mb-1 grid place-items-center">
      <svg viewBox="0 0 6 8" className="h-2 w-[6px]">
        <path d="M.5 .5 L3 3 L5.5 .5 M.5 4.5 L3 7 L5.5 4.5" fill="none" stroke="#000" strokeWidth="1.3" />
      </svg>
    </button>
  </aside>
);

/* ---------- bottom bar ---------- */

const Separator = () => <div className="h-[41px] w-px shrink-0 bg-[#b5b5b5]" />;

const HelpBubble = ({ x = 18, y = 9 }) => (
  <>
    <ellipse cx={x} cy={y} rx="7" ry="6" fill="#cfe3f4" stroke="#8aa4bd" />
    <text x={x - 3} y={y + 4} fontSize="11" fontWeight="bold" fill="#1c2a5a">?</text>
  </>
);

const QUERY_TOOLS: Tool[] = [
  {
    label: "Informazioni",
    icon: (
      <svg viewBox="0 0 28 28" className="size-7">
        <path d="M3 2 L3 20 L8 16 L12 26 L15 24 L11 15 L17 15Z" fill="#fff" stroke="#46527a" strokeWidth="1.5" />
        <HelpBubble x={20} y={8} />
      </svg>
    ),
  },
  {
    label: "Aggancio",
    icon: (
      <svg viewBox="0 0 28 28" className="size-7">
        <path d="M1 4 H27 M5 4 L12 25" stroke="#2f7fd0" strokeWidth="1.6" />
        <circle cx="19" cy="10" r="6.5" fill="none" stroke="#2f7fd0" strokeWidth="1.6" />
        <path d="M1 4 H9 M5 0 V9 M2 1 L8 7 M8 1 L2 7 M7 24 H15 M11 20 V28 M8 21 L14 27 M14 21 L8 27 M9 14 L13 18 M13 14 L9 18 M16 10 H22 M19 7 V13" stroke="#e03a3a" strokeWidth="1.4" />
        <path d="M20 13 L20 24 L23 22 L25 26 L27 25 L25 21 L28 20Z" fill="#fff" stroke="#000" />
      </svg>
    ),
  },
  {
    label: "Misura area",
    icon: (
      <svg viewBox="0 0 28 28" className="size-7">
        <path d="M4 13 L18 7 L23 18 L9 22Z" fill="#d9edf9" stroke="#333" strokeDasharray="2 1.5" />
        <path d="M16 5 L23 7 L27 11 M23 7 V11 M7 22 L10 25" stroke="#222" strokeWidth="2" fill="none" />
        <circle cx="15" cy="5" r="1.6" fill="#d83030" />
      </svg>
    ),
  },
  {
    label: "Colori",
    icon: (
      <svg viewBox="0 0 28 28" className="size-7">
        <path d="M4 15 Q6 10 13 12 L15 18 L19 15 Q27 14 26 21 Q22 27 12 26 Q4 24 4 15Z" fill="#f2b62c" />
        <path d="M5 14 Q7 11 12 13 L11 18 L6 19Z" fill="#e3432c" />
        <path d="M7 21 Q12 27 20 24 L15 20Z" fill="#4fb848" />
        <path d="M12 19 L21 4 L24 6 L15 20Z" fill="#d98a5a" stroke="#8d4a2c" strokeWidth=".6" />
        <path d="M2 3 V9 L5 7 Q8 5 10 8 L12 7 Q9 1 4 4Z" fill="#2fa040" />
      </svg>
    ),
  },
  {
    label: "Calibro",
    icon: (
      <svg viewBox="0 0 28 28" className="size-7">
        <path d="M4 3 H24 L26 6 H12 M3 14 L9 13 H24 L26 17 H12 M12 24 H20" fill="none" stroke="#333" strokeWidth="1.2" />
        <path d="M12 1 H17 L14 27 H8Z" fill="#d7925c" stroke="#5f3b1c" />
      </svg>
    ),
  },
  {
    label: "Analisi linea",
    icon: (
      <svg viewBox="0 0 28 28" className="size-7">
        <path d="M4 24 L11 2" stroke="#2458b8" strokeWidth="2" />
        <HelpBubble x={19} y={14} />
      </svg>
    ),
  },
];

const OUTPUT_TOOLS: Tool[] = [
  {
    label: "Informazioni zona",
    icon: (
      <svg viewBox="0 0 28 28" className="size-7">
        <path d="M3 8 H15 V26 H3Z" fill="#fff" stroke="#2f63b0" />
        <circle cx="9" cy="14" r="3" fill="none" stroke="#c9983c" strokeWidth="1.6" />
        <text x="3" y="25" fontSize="8" fontWeight="bold" fill="#2c3c8c">WZ</text>
        <circle cx="19" cy="8" r="7" fill="#2a62a8" />
        <text x="17" y="12" fontSize="12" fontWeight="bold" fill="#fff">i</text>
      </svg>
    ),
  },
  {
    label: "Simulazione",
    icon: (
      <svg viewBox="0 0 28 28" className="size-7">
        <path d="M2 3 H14 V7 H12 V11 H5 V7 H2Z" fill="#8d98a5" stroke="#555" />
        <path d="M6 11 H11 V20 L8 22Z" fill="#e3ab1c" />
        <path d="M4 24 L12 13 H26 V26 H4Z" fill="#4c4c50" />
        <path d="M14 19 H24 M19 14 V24 M15 15 L23 23 M23 15 L15 23" stroke="#e02020" strokeWidth="1.3" />
      </svg>
    ),
  },
  {
    label: "Collisione",
    icon: (
      <svg viewBox="0 0 28 28" className="size-7">
        <path d="M2 1 H26 V13 H2Z" fill="#fff" />
        <path d="M3 13 H25 V25 H3Z" fill="#4482d8" />
        <path d="M3 13 H25" stroke="#222" />
        <path d="M10 3 L14 5 L18 3 V10 H10Z" fill="#e9a24a" stroke="#222" />
        <path d="M10 13 H18 V20 L14 24 L10 20Z" fill="#c02040" stroke="#eee" />
      </svg>
    ),
  },
  {
    label: "Documentazione",
    icon: (
      <svg viewBox="0 0 28 28" className="size-7">
        <path d="M5 4 H13 V8 H23 V24 H5Z" fill="#fff" stroke="#111" strokeWidth="1.5" />
        <path d="M5 11 H23" stroke="#111" strokeWidth="1.5" />
        <path d="M10 22 V14 H21 M14 22 V17 H21 V22 H17 V19" fill="none" stroke="#c81c1c" strokeWidth="1.3" />
        <path d="M7 14 H8 M7 17 H8 M7 20 H8" stroke="#c81c1c" />
      </svg>
    ),
  },
];

const ToolStrip = ({ tools }: { tools: Tool[] }) => (
  <div className="flex pr-[2px]">
    {tools.map((tool) => (
      <button key={tool.label} aria-label={tool.label} className="grid h-9 w-[39px] place-items-center">
        {tool.icon}
      </button>
    ))}
  </div>
);

const COORDS = [
  ["X", "-650.0000mm"],
  ["Y", "290.0000mm"],
  ["Z", "0.0000mm"],
];

const CommandBar = () => (
  <section className="flex h-[42px] shrink-0 items-center border-t border-[#85858d] bg-[#f0f0f0]">
    <GripV />
    <label htmlFor="command" className="w-[167px] whitespace-nowrap">
      Seleziona un nuovo comando...
    </label>
    <svg viewBox="0 0 22 22" className="mr-px size-[22px] shrink-0">
      <path d="M2 14 L9 5 L12 8 L6 15 L10 17 L17 8" fill="none" stroke="#b3b83c" strokeWidth="2.6" />
      <path d="M1 7 V17 M19 1 V11" stroke="#d86a5a" />
      <path d="M11 11 L20 20 M20 11 L12 20" stroke="#c83228" strokeWidth="2.4" />
    </svg>
    <div className="relative flex items-center">
      <select id="command" className="h-[22px] w-[214px] appearance-none border-b border-[#8a8a8a] bg-white">
        <option></option>
      </select>
      <svg viewBox="0 0 10 6" className="pointer-events-none absolute right-[3px] h-[6px] w-[10px]">
        <path d="M1 1 L5 5 L9 1" fill="none" stroke="#777" />
      </svg>
    </div>
    <div className="ml-[2px]">
      <Separator />
    </div>
    <GripV />
    <div className="flex pr-[2px]">
      {COORDS.map(([axis, value]) => (
        <label key={axis} className="flex items-center">
          <span className="w-[25px] pl-[6px] text-lg leading-6">{axis}</span>
          <input
            defaultValue={value}
            className="h-[22px] w-[133px] border-b border-[#8a8a8a] bg-white px-[3px]"
          />
        </label>
      ))}
    </div>
    <Separator />
    <GripV />
    <ToolStrip tools={QUERY_TOOLS} />
    <Separator />
    <GripV />
    <ToolStrip tools={OUTPUT_TOOLS} />
    <Separator />
    <GripV />
    <button
      aria-label="Calcolo in coda"
      className="grid h-9 w-[39px] shrink-0 place-items-center rounded-[3px] border border-[#9ccbf0] bg-[#cce8ff]"
    >
      <svg viewBox="0 0 32 32" className="size-8">
        <path d="M2 2 H16 V22 H2Z" fill="#8db7ee" stroke="#4c7cc0" />
        <path d="M4 6 L6 8 L9 4 M4 12 L6 14 L9 10 M4 18 L6 20 L9 16" fill="none" stroke="#c83c3c" />
        <path d="M7 22 L13 14 L16 16 L10 27 L14 28 L22 14 L25 16 L20 24" fill="none" stroke="#c8bc2c" strokeWidth="2.6" />
        <path d="M25 14 L31 15 L27 20 L30 21 L21 31 L24 23 L21 22Z" fill="#ee6a1c" stroke="#a8400c" strokeWidth=".7" />
      </svg>
    </button>
    <div role="progressbar" aria-label="Avanzamento" className="mr-1 ml-[3px] h-[23px] min-w-0 flex-1 border border-[#c4c4c4] bg-[#e6e6e6]" />
  </section>
);

const StatusBar = () => (
  <footer className="flex h-[29px] shrink-0 items-center bg-[#f0f0f0] px-[2px] text-xs font-semibold whitespace-pre">
    Percorso 1 | Torico (10.00) - T10 Le20.0 Sm2.00 | Tempo : 1h 20m 54s (rap 0s, acc 35s, lav 1h 20m 19s)
    {" |Tolleranza=0.100 | Sovrametallo=2.000"}
  </footer>
);

export default function App() {
  return (
    <div className="flex h-screen flex-col overflow-hidden bg-[#f0f0f0] font-['Open_Sans','Noto_Sans',sans-serif] text-[11px] text-black">
      <TitleBar />
      <RibbonTabs />
      <Ribbon />
      <div className="flex min-h-0 flex-1 border-t border-[#85858d]">
        <SidePanel />
        <Viewport />
        <SideToolbar />
      </div>
      <CommandBar />
      <StatusBar />
    </div>
  );
}
